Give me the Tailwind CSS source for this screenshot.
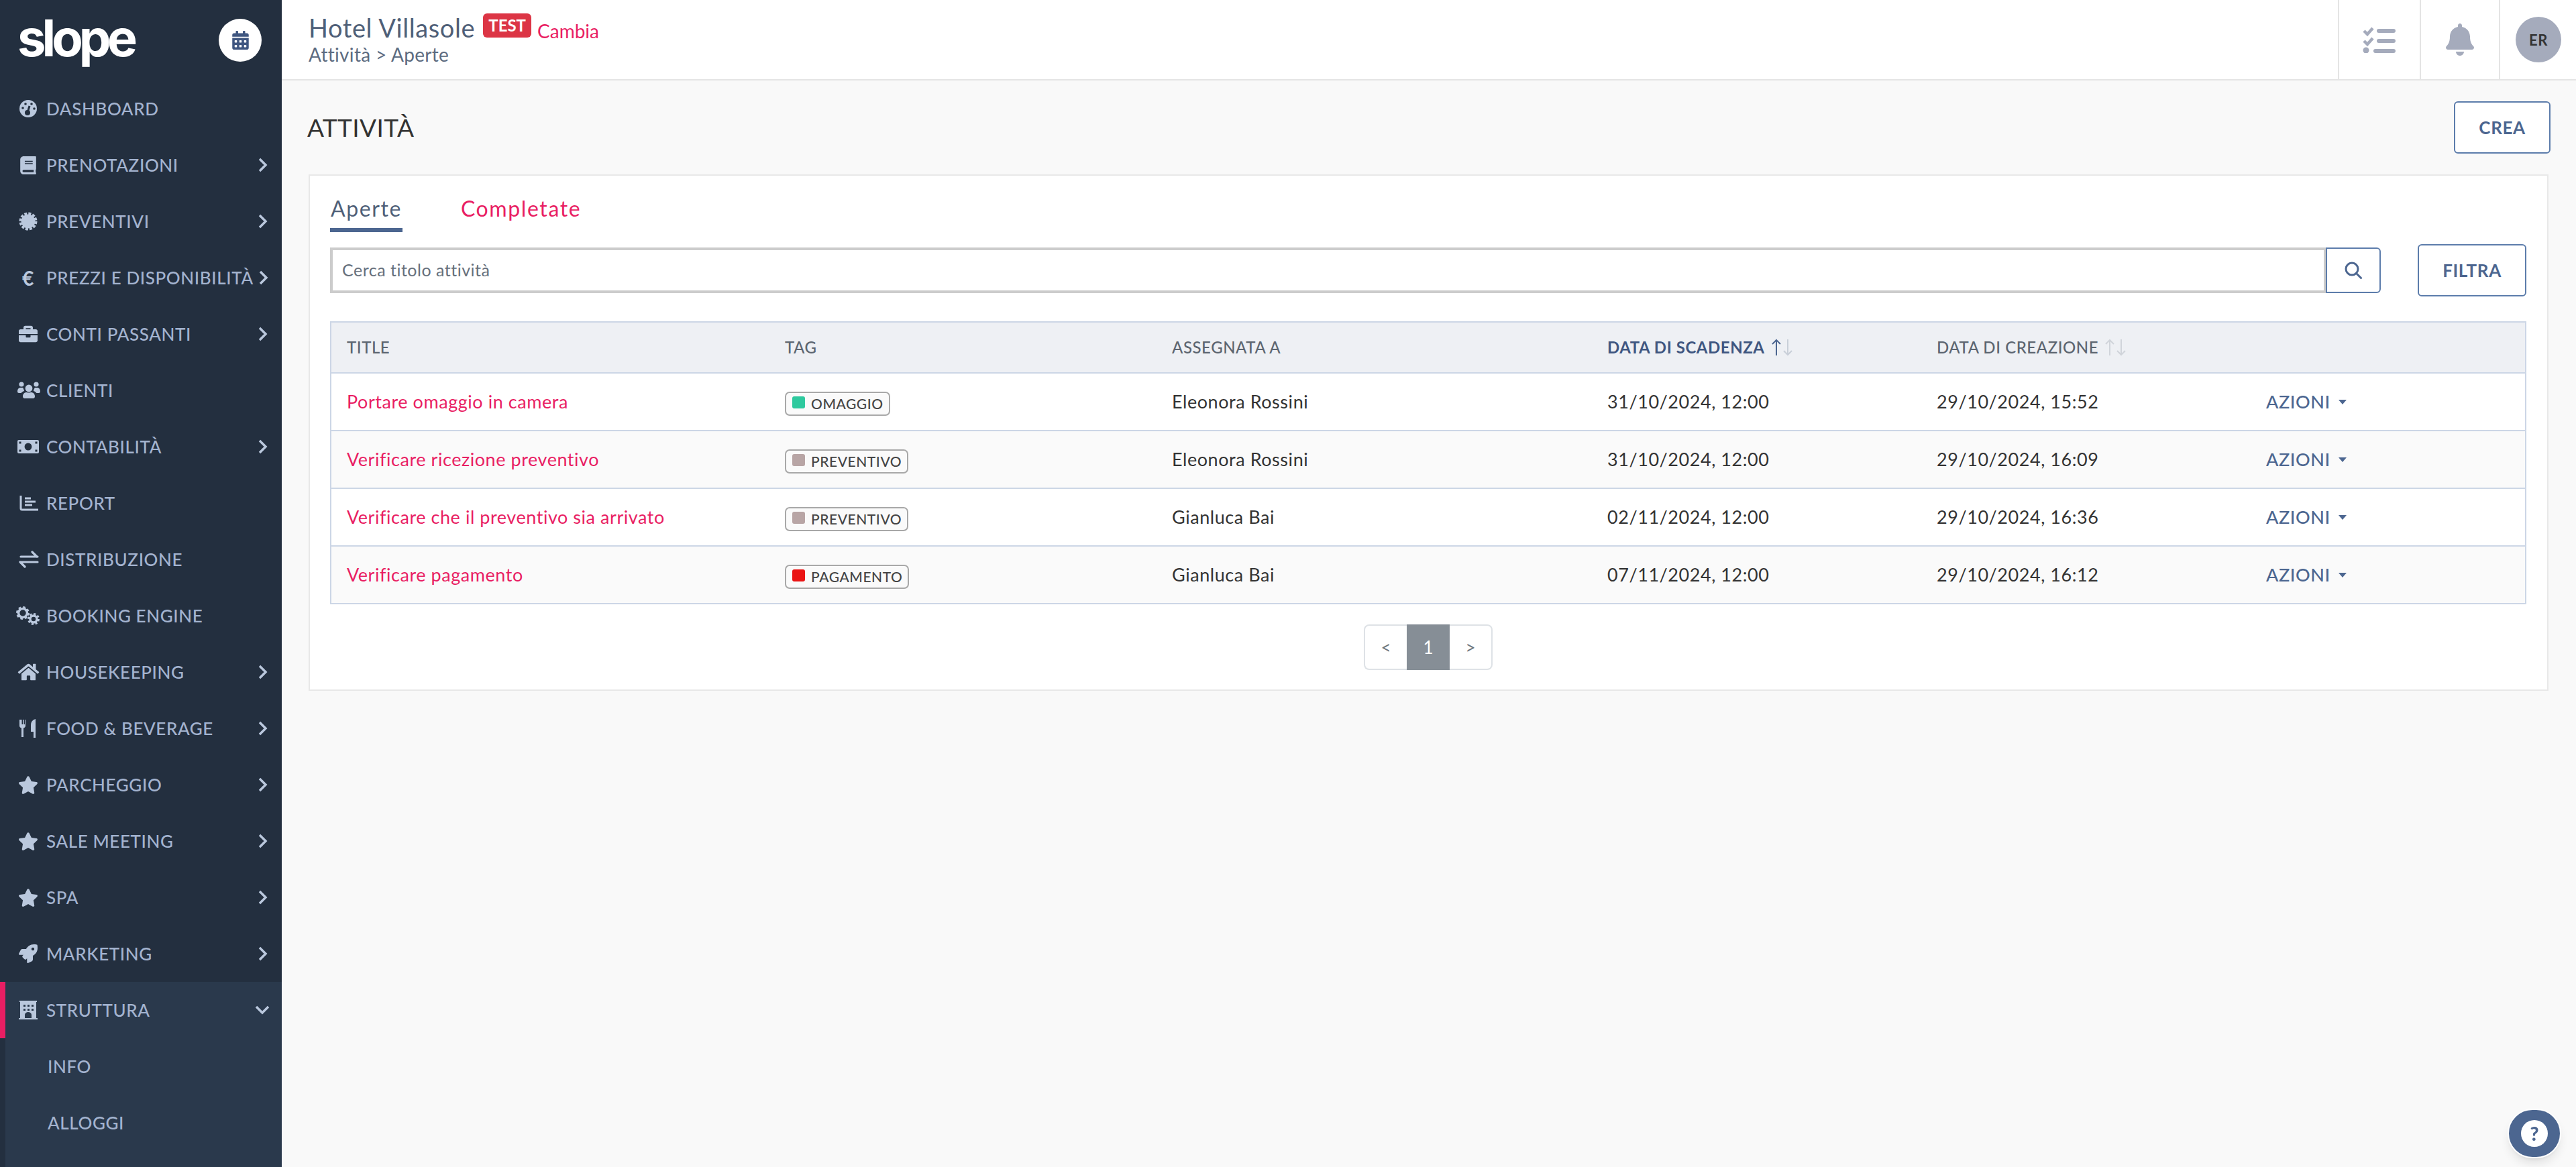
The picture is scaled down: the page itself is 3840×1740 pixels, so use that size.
<!DOCTYPE html>
<html lang="en">
<head>
  <meta charset="UTF-8" />
  <title>Slope - Attività</title>
  <script src="https://cdn.jsdelivr.net/npm/@tailwindcss/browser@4"></script>
</head>
<body class="h-[1740px] overflow-hidden bg-[#f9f9f9] font-['Lato',sans-serif] flex">

  <!-- sidebar -->
  <aside class="w-[420px] h-[1740px] shrink-0 overflow-hidden bg-[#232f3f] text-[#a3b3cf] text-[26px] font-medium tracking-[0.6px]">
    <div class="h-[120px] flex items-center justify-between pl-[26px] pr-[30px]">
      <span class="text-white text-[76px] font-['Inter',sans-serif] font-bold tracking-[-6px] leading-none -mt-[8px]">slope</span>
      <span class="w-[64px] h-[64px] rounded-full bg-white flex items-center justify-center">
        <svg class="w-[25px] h-[28px] fill-[#3f5680]" viewBox="0 0 448 512"><path d="M0 464c0 26.5 21.5 48 48 48h352c26.5 0 48-21.5 48-48V192H0v272zm320-196c0-6.6 5.4-12 12-12h40c6.6 0 12 5.4 12 12v40c0 6.6-5.4 12-12 12h-40c-6.6 0-12-5.4-12-12v-40zm0 128c0-6.6 5.4-12 12-12h40c6.6 0 12 5.4 12 12v40c0 6.6-5.4 12-12 12h-40c-6.6 0-12-5.4-12-12v-40zM192 268c0-6.6 5.4-12 12-12h40c6.6 0 12 5.4 12 12v40c0 6.6-5.4 12-12 12h-40c-6.6 0-12-5.4-12-12v-40zm0 128c0-6.6 5.4-12 12-12h40c6.6 0 12 5.4 12 12v40c0 6.6-5.4 12-12 12h-40c-6.6 0-12-5.4-12-12v-40zM64 268c0-6.6 5.4-12 12-12h40c6.6 0 12 5.4 12 12v40c0 6.6-5.4 12-12 12H76c-6.6 0-12-5.4-12-12v-40zm0 128c0-6.6 5.4-12 12-12h40c6.6 0 12 5.4 12 12v40c0 6.6-5.4 12-12 12H76c-6.6 0-12-5.4-12-12v-40zM400 64h-48V16c0-8.8-7.2-16-16-16h-32c-8.8 0-16 7.2-16 16v48H160V16c0-8.8-7.2-16-16-16h-32c-8.8 0-16 7.2-16 16v48H48C21.5 64 0 85.5 0 112v48h448v-48c0-26.5-21.5-48-48-48z"/></svg>
      </span>
    </div>

    <nav>
      <a class="h-[84px] flex items-center pl-[26px]">
        <svg class="w-[32px] h-[28px]" viewBox="0 0 32 28"><circle cx="16" cy="14" r="13" fill="#bac8dd"/><path d="M15 20l3-10" stroke="#232f3f" stroke-width="3"/><circle cx="15" cy="20" r="4" fill="#232f3f"/><circle cx="8" cy="13" r="1.8" fill="#232f3f"/><circle cx="12" cy="7" r="1.8" fill="#232f3f"/><circle cx="21" cy="7" r="1.8" fill="#232f3f"/><circle cx="25" cy="14" r="1.8" fill="#232f3f"/></svg>
        <span class="ml-[11px]">DASHBOARD</span>
      </a>
      <a class="h-[84px] flex items-center pl-[26px]">
        <span class="w-[32px] flex justify-center"><svg class="w-[24px] h-[27px] fill-[#bac8dd]" viewBox="0 0 448 512"><path d="M448 360V24c0-13.3-10.7-24-24-24H96C43 0 0 43 0 96v320c0 53 43 96 96 96h328c13.3 0 24-10.7 24-24v-16c0-7.5-3.5-14.3-8.9-18.7-4.2-15.4-4.2-59.3 0-74.7 5.4-4.3 8.9-11.1 8.9-18.6zM128 134c0-3.3 2.7-6 6-6h212c3.3 0 6 2.7 6 6v20c0 3.3-2.7 6-6 6H134c-3.3 0-6-2.7-6-6v-20zm0 64c0-3.3 2.7-6 6-6h212c3.3 0 6 2.7 6 6v20c0 3.3-2.7 6-6 6H134c-3.3 0-6-2.7-6-6v-20zm253.4 250H96c-17.7 0-32-14.3-32-32 0-17.6 14.4-32 32-32h285.4c-1.9 17.1-1.9 46.9 0 64z"/></svg></span>
        <span class="ml-[11px]">PRENOTAZIONI</span>
        <svg class="ml-auto mr-[21px] w-[14px] h-[22px] fill-none stroke-[#bac8dd] stroke-[3.5]" viewBox="0 0 14 22"><path d="M2 2l9 9-9 9"/></svg>
      </a>
      <a class="h-[84px] flex items-center pl-[26px]">
        <svg class="w-[32px] h-[28px]" viewBox="0 0 32 28"><circle cx="16" cy="14" r="10.5" fill="#bac8dd"/><circle cx="16" cy="14" r="11.5" fill="none" stroke="#bac8dd" stroke-width="4" stroke-dasharray="4 2.02"/></svg>
        <span class="ml-[11px]">PREVENTIVI</span>
        <svg class="ml-auto mr-[21px] w-[14px] h-[22px] fill-none stroke-[#bac8dd] stroke-[3.5]" viewBox="0 0 14 22"><path d="M2 2l9 9-9 9"/></svg>
      </a>
      <a class="h-[84px] flex items-center pl-[26px]">
        <span class="w-[32px] text-center text-[#bac8dd] text-[30px] font-bold leading-none">€</span>
        <span class="ml-[11px] whitespace-nowrap">PREZZI E DISPONIBILITÀ</span>
        <svg class="ml-auto mr-[20px] w-[14px] h-[22px] shrink-0 fill-none stroke-[#bac8dd] stroke-[3.5]" viewBox="0 0 14 22"><path d="M2 2l9 9-9 9"/></svg>
      </a>
      <a class="h-[84px] flex items-center pl-[26px]">
        <span class="w-[32px] flex justify-center"><svg class="w-[28px] h-[28px] fill-[#bac8dd]" viewBox="0 0 512 512"><path d="M320 336c0 8.84-7.16 16-16 16h-96c-8.84 0-16-7.16-16-16v-48H0v144c0 25.6 22.4 48 48 48h416c25.6 0 48-22.4 48-48V288H320v48zm144-208h-80V80c0-25.6-22.4-48-48-48H176c-25.6 0-48 22.4-48 48v48H48c-25.6 0-48 22.4-48 48v80h512v-80c0-25.6-22.4-48-48-48zm-144 0H192V96h128v32z"/></svg></span>
        <span class="ml-[11px]">CONTI PASSANTI</span>
        <svg class="ml-auto mr-[21px] w-[14px] h-[22px] fill-none stroke-[#bac8dd] stroke-[3.5]" viewBox="0 0 14 22"><path d="M2 2l9 9-9 9"/></svg>
      </a>
      <a class="h-[84px] flex items-center pl-[26px]">
        <svg class="w-[34px] h-[26px] fill-[#bac8dd]" viewBox="0 0 34 26"><circle cx="6" cy="4" r="3.6"/><circle cx="28" cy="4" r="3.6"/><circle cx="17" cy="10" r="5.4"/><path d="M0 15c0-4 2-6 5-6h3c1 1 1.6 3 2 5-2 .6-3.4 1.6-4.4 3H2c-1 0-2-1-2-2zM34 15c0-4-2-6-5-6h-3c-1 1-1.6 3-2 5 2 .6 3.4 1.6 4.4 3H32c1 0 2-1 2-2zM8 22c0-4 3-6 5.4-6 1.4.6 5.8.6 7.2 0 2.4 0 5.4 2 5.4 6 0 2-1.2 3-2.6 3H10.6C9.2 25 8 24 8 22z"/></svg>
        <span class="ml-[9px]">CLIENTI</span>
      </a>
      <a class="h-[84px] flex items-center pl-[26px]">
        <svg class="w-[32px] h-[20px]" viewBox="0 0 32 20"><rect width="32" height="20" rx="2" fill="#bac8dd"/><ellipse cx="16" cy="10" rx="5.4" ry="5.6" fill="#232f3f"/><rect x="2.500" y="2.500" width="3" height="3" fill="#232f3f"/><rect x="26.500" y="2.500" width="3" height="3" fill="#232f3f"/><rect x="2.500" y="14.500" width="3" height="3" fill="#232f3f"/><rect x="26.500" y="14.500" width="3" height="3" fill="#232f3f"/></svg>
        <span class="ml-[11px]">CONTABILITÀ</span>
        <svg class="ml-auto mr-[21px] w-[14px] h-[22px] fill-none stroke-[#bac8dd] stroke-[3.5]" viewBox="0 0 14 22"><path d="M2 2l9 9-9 9"/></svg>
      </a>
      <a class="h-[84px] flex items-center pl-[26px]">
        <svg class="w-[32px] h-[24px]" viewBox="0 0 32 24"><path d="M5 1v19q0 2 2 2h24" fill="none" stroke="#bac8dd" stroke-width="3"/><path d="M11 5h9M11 10h16M11 15h11" stroke="#bac8dd" stroke-width="3"/></svg>
        <span class="ml-[11px]">REPORT</span>
      </a>
      <a class="h-[84px] flex items-center pl-[26px]">
        <svg class="w-[32px] h-[26px]" viewBox="0 0 32 26"><path d="M5 9h25M22 2l7 7M30 17H5M11 24l-7-7" fill="none" stroke="#bac8dd" stroke-width="3.2" stroke-linecap="round"/></svg>
        <span class="ml-[11px]">DISTRIBUZIONE</span>
      </a>
      <a class="h-[84px] flex items-center pl-[24px]">
        <svg class="w-[36px] h-[28px]" viewBox="0 0 36 28"><circle cx="10" cy="10" r="6.500" fill="none" stroke="#bac8dd" stroke-width="3.6"/><circle cx="10" cy="10" r="8.500" fill="none" stroke="#bac8dd" stroke-width="3" stroke-dasharray="3.5 3.17"/><circle cx="26" cy="19" r="5" fill="none" stroke="#bac8dd" stroke-width="3.4"/><circle cx="26" cy="19" r="7.500" fill="none" stroke="#bac8dd" stroke-width="3" stroke-dasharray="3.1 2.79"/></svg>
        <span class="ml-[9px]">BOOKING ENGINE</span>
      </a>
      <a class="h-[84px] flex items-center pl-[26px]">
        <span class="w-[32px] flex justify-center"><svg class="w-[33px] h-[28px] shrink-0 fill-[#bac8dd]" viewBox="0 0 576 512"><path d="M280.37 148.26L96 300.11V464a16 16 0 0 0 16 16l112.06-.29a16 16 0 0 0 15.92-16V368a16 16 0 0 1 16-16h64a16 16 0 0 1 16 16v95.64a16 16 0 0 0 16 16.05L464 480a16 16 0 0 0 16-16V300L295.67 148.26a12.19 12.19 0 0 0-15.3 0zM571.6 251.47L488 182.56V44.05a12 12 0 0 0-12-12h-56a12 12 0 0 0-12 12v72.61L318.47 43a48 48 0 0 0-61 0L4.34 251.47a12 12 0 0 0-1.6 16.9l25.5 31A12 12 0 0 0 45.15 301l235.22-193.74a12.19 12.19 0 0 1 15.3 0L530.9 301a12 12 0 0 0 16.9-1.6l25.5-31a12 12 0 0 0-1.7-16.93z"/></svg></span>
        <span class="ml-[11px]">HOUSEKEEPING</span>
        <svg class="ml-auto mr-[21px] w-[14px] h-[22px] fill-none stroke-[#bac8dd] stroke-[3.5]" viewBox="0 0 14 22"><path d="M2 2l9 9-9 9"/></svg>
      </a>
      <a class="h-[84px] flex items-center pl-[26px]">
        <svg class="w-[32px] h-[28px] fill-[#bac8dd]" viewBox="0 0 32 28"><path d="M5 1h1.500v7h1.500V1h1.500v7h1.500V1H12v9q0 2.500-3 3.500V27H6V13.500Q3 12.500 3 10V1zM27 0v28h-3v-9h-4V9q0-7 7-9z"/></svg>
        <span class="ml-[11px]">FOOD &amp; BEVERAGE</span>
        <svg class="ml-auto mr-[21px] w-[14px] h-[22px] fill-none stroke-[#bac8dd] stroke-[3.5]" viewBox="0 0 14 22"><path d="M2 2l9 9-9 9"/></svg>
      </a>
      <a class="h-[84px] flex items-center pl-[26px]">
        <span class="w-[32px] flex justify-center"><svg class="w-[30px] h-[27px] shrink-0 fill-[#bac8dd]" viewBox="0 0 576 512"><path d="M259.3 17.8L194 150.2 47.9 171.5c-26.2 3.8-36.7 36.1-17.7 54.6l105.7 103-25 145.5c-4.5 26.3 23.2 46 46.4 33.7L288 439.6l130.7 68.7c23.2 12.2 50.9-7.4 46.4-33.7l-25-145.5 105.7-103c19-18.5 8.5-50.8-17.7-54.6L382 150.2 316.7 17.8c-11.7-23.6-45.6-23.9-57.4 0z"/></svg></span>
        <span class="ml-[11px]">PARCHEGGIO</span>
        <svg class="ml-auto mr-[21px] w-[14px] h-[22px] fill-none stroke-[#bac8dd] stroke-[3.5]" viewBox="0 0 14 22"><path d="M2 2l9 9-9 9"/></svg>
      </a>
      <a class="h-[84px] flex items-center pl-[26px]">
        <span class="w-[32px] flex justify-center"><svg class="w-[30px] h-[27px] shrink-0 fill-[#bac8dd]" viewBox="0 0 576 512"><path d="M259.3 17.8L194 150.2 47.9 171.5c-26.2 3.8-36.7 36.1-17.7 54.6l105.7 103-25 145.5c-4.5 26.3 23.2 46 46.4 33.7L288 439.6l130.7 68.7c23.2 12.2 50.9-7.4 46.4-33.7l-25-145.5 105.7-103c19-18.5 8.5-50.8-17.7-54.6L382 150.2 316.7 17.8c-11.7-23.6-45.6-23.9-57.4 0z"/></svg></span>
        <span class="ml-[11px]">SALE MEETING</span>
        <svg class="ml-auto mr-[21px] w-[14px] h-[22px] fill-none stroke-[#bac8dd] stroke-[3.5]" viewBox="0 0 14 22"><path d="M2 2l9 9-9 9"/></svg>
      </a>
      <a class="h-[84px] flex items-center pl-[26px]">
        <span class="w-[32px] flex justify-center"><svg class="w-[30px] h-[27px] shrink-0 fill-[#bac8dd]" viewBox="0 0 576 512"><path d="M259.3 17.8L194 150.2 47.9 171.5c-26.2 3.8-36.7 36.1-17.7 54.6l105.7 103-25 145.5c-4.5 26.3 23.2 46 46.4 33.7L288 439.6l130.7 68.7c23.2 12.2 50.9-7.4 46.4-33.7l-25-145.5 105.7-103c19-18.5 8.5-50.8-17.7-54.6L382 150.2 316.7 17.8c-11.7-23.6-45.6-23.9-57.4 0z"/></svg></span>
        <span class="ml-[11px]">SPA</span>
        <svg class="ml-auto mr-[21px] w-[14px] h-[22px] fill-none stroke-[#bac8dd] stroke-[3.5]" viewBox="0 0 14 22"><path d="M2 2l9 9-9 9"/></svg>
      </a>
      <a class="h-[84px] flex items-center pl-[26px]">
        <span class="w-[32px] flex justify-center"><svg class="w-[28px] h-[28px] fill-[#bac8dd]" viewBox="0 0 512 512"><path d="M505.12019,19.09375c-1.18945-5.53125-6.65819-11-12.207-12.1875C460.716,0,435.507,0,410.40747,0,307.17523,0,245.26909,55.20312,199.05238,128H94.83772c-16.34763.01562-35.55658,11.875-42.88664,26.48438L2.51562,253.29688A28.4,28.4,0,0,0,0,264a24.00867,24.00867,0,0,0,24.00582,24H127.81618l-22.47457,22.46875c-11.36521,11.36133-12.99607,32.25781,0,45.25L156.24582,406.625c11.15623,11.1875,32.15619,13.15625,45.27726,0l22.47457-22.46875V488a24.00867,24.00867,0,0,0,24.00581,24,28.55934,28.55934,0,0,0,10.707-2.51562l98.72834-49.39063c14.62888-7.29687,26.50776-26.5,26.50776-42.85937V312.79688c72.59753-46.3125,128.03493-108.40626,128.03493-211.09376C512.07526,76.5,512.07526,51.29688,505.12019,19.09375ZM384.04033,168A40,40,0,1,1,424.05,128,40.02322,40.02322,0,0,1,384.04033,168Z"/></svg></span>
        <span class="ml-[11px]">MARKETING</span>
        <svg class="ml-auto mr-[21px] w-[14px] h-[22px] fill-none stroke-[#bac8dd] stroke-[3.5]" viewBox="0 0 14 22"><path d="M2 2l9 9-9 9"/></svg>
      </a>
      <a class="h-[84px] flex items-center pl-[18px] border-l-[8px] border-[#e91e63] bg-[#2a394c]">
        <svg class="w-[32px] h-[28px]" viewBox="0 0 32 28"><path d="M3 0h26v2h-1v24h2v2H2v-2h2V2H3z" fill="#bac8dd"/><path d="M9 6h3v3H9zM15 6h3v3h-3zM21 6h3v3h-3zM9 12h3v3H9zM15 12h3v3h-3zM21 12h3v3h-3zM11 26v-5a5 4 0 0 1 10 0v5z" fill="#2a394c"/></svg>
        <span class="ml-[11px]">STRUTTURA</span>
        <svg class="ml-auto mr-[18px] w-[22px] h-[14px] fill-none stroke-[#bac8dd] stroke-[3.5]" viewBox="0 0 22 14"><path d="M2 2l9 9 9-9"/></svg>
      </a>
      <div class="ml-[8px] bg-[#2a394c]">
        <a class="h-[84px] flex items-center pl-[63px]">INFO</a>
        <a class="h-[84px] flex items-center pl-[63px]">ALLOGGI</a>
        <a class="h-[84px] flex items-center pl-[63px]">CONDIZIONI DI</a>
      </div>
    </nav>
  </aside>

  <main class="flex-1 min-w-0 flex flex-col">
    <!-- top bar -->
    <header class="h-[120px] bg-white border-b-2 border-[#e4e4e4] flex items-stretch shrink-0">
      <div class="pl-[40px] pt-[18px]">
        <div class="flex items-start h-[46px]">
          <span class="text-[38px] leading-[46px] text-[#4f5f78] tracking-[0.6px]">Hotel Villasole</span>
          <span class="ml-[12px] mt-[2px] h-[36px] px-[8px] rounded-[6px] bg-[#dc3545] text-white text-[24px] font-bold leading-[36px]">TEST</span>
          <span class="ml-[9px] mt-[9px] text-[28px] leading-[38px] text-[#e91e63]">Cambia</span>
        </div>
        <div class="text-[28px] leading-[34px] text-[#5c6b80] tracking-[0.3px]">Attività &gt; Aperte</div>
      </div>
      <div class="ml-auto flex">
        <div class="w-[122px] border-l-2 border-[#e4e4e4] flex items-center justify-center">
          <svg class="w-[50px] h-[40px]" viewBox="0 0 50 40"><path d="M2 7l5 5 8-9M2 22l5 5 8-9" fill="none" stroke="#a5abbc" stroke-width="4.500"/><circle cx="5" cy="36" r="4.500" fill="#a5abbc"/><path d="M24 7h22M24 22h22M19 37h27" stroke="#a5abbc" stroke-width="6" stroke-linecap="round"/></svg>
        </div>
        <div class="w-[118px] border-l-2 border-[#e4e4e4] flex items-center justify-center">
          <svg class="w-[42px] h-[48px] fill-[#a5abbc]" viewBox="0 0 448 512"><path d="M224 512c35.32 0 63.97-28.65 63.97-64H160.03c0 35.35 28.65 64 63.97 64zm215.39-149.71c-19.32-20.76-55.47-51.99-55.47-154.29 0-77.7-54.48-139.9-127.94-155.16V32c0-17.67-14.32-32-31.98-32s-31.98 14.33-31.98 32v20.84C118.56 68.1 64.08 130.3 64.08 208c0 102.3-36.15 133.53-55.47 154.29-6 6.45-8.66 14.16-8.61 21.71.11 16.4 12.98 32 32.1 32h383.8c19.12 0 32-15.6 32.1-32 .05-7.55-2.61-15.27-8.61-21.71z"/></svg>
        </div>
        <div class="w-[115px] border-l-2 border-[#e4e4e4] flex items-center pl-[23px]">
          <span class="w-[68px] h-[68px] rounded-full bg-[#a5abbc] flex items-center justify-center text-[#333] text-[22px] font-bold tracking-[0.5px]">ER</span>
        </div>
      </div>
    </header>

    <div class="h-[140px] shrink-0 flex items-center justify-between pl-[38px] pr-[38px]">
      <h1 class="text-[37px] text-[#333] font-normal tracking-[0.4px]">ATTIVITÀ</h1>
      <button class="w-[144px] h-[78px] rounded-[6px] border-2 border-[#5c7cab] bg-white text-[#4c6690] text-[26px] font-bold tracking-[0.6px]">CREA</button>
    </div>

    <!-- card -->
    <section class="ml-[40px] mr-[41px] h-[770px] bg-white border-2 border-[#e8e8e8] pl-[30px] pr-[31px]">
      <div class="flex h-[84px] items-end gap-[86px] text-[32px] tracking-[1.6px]">
        <a class="h-full flex items-center pt-[20px] px-[1px] border-b-[6px] border-[#4c6690] text-[#4f5f78]">Aperte</a>
        <a class="h-full flex items-center pt-[20px] px-[1px] border-b-[6px] border-transparent text-[#e91e63]">Completate</a>
      </div>

      <div class="mt-[18px] h-[78px] flex items-center justify-between">
        <div class="flex h-[68px]">
          <div class="w-[2976px] border-[4px] border-[#cccccc] flex items-center pl-[14px] text-[25px] tracking-[0.5px] text-[#66707c]">Cerca titolo attività</div>
          <button class="w-[82px] -ml-[1px] rounded-r-[6px] border-2 border-[#5c7cab] flex items-center justify-center">
            <svg class="w-[26px] h-[26px] fill-none stroke-[#4c6690] stroke-[3]" viewBox="0 0 26 26"><circle cx="11" cy="11" r="9"/><path d="M17.500 17.500l7 7" stroke-linecap="round"/></svg>
          </button>
        </div>
        <button class="w-[162px] h-[78px] rounded-[6px] border-2 border-[#5c7cab] text-[#4c6690] text-[26px] font-bold tracking-[0.6px]">FILTRA</button>
      </div>

      <table class="mt-[37px] w-[3274px] table-fixed border-collapse border-2 border-[#ccd6e6] text-[27px] tracking-[0.55px]">
        <colgroup>
          <col class="w-[653px]" /><col class="w-[577px]" /><col class="w-[649px]" /><col class="w-[491px]" /><col class="w-[491px]" /><col />
        </colgroup>
        <thead class="bg-[#eef0f4] text-[24px] font-medium text-[#5c6570]">
          <tr class="h-[76px] border-b-2 border-[#ccd6e6]">
            <th class="pl-[23px] text-left font-medium">TITLE</th>
            <th class="pl-[24px] text-left font-medium">TAG</th>
            <th class="pl-[24px] text-left font-medium">ASSEGNATA A</th>
            <th class="pl-[24px] text-left font-bold text-[#3f5680]">
              <span class="inline-flex items-center gap-[8px]">DATA DI SCADENZA
                <svg class="w-[36px] h-[26px] fill-none stroke-[2]" viewBox="0 0 36 26"><path d="M9 25V2M3 8l6-6 6 6" stroke="#4c6690"/><path d="M26 1v23M20 18l6 6 6-6" stroke="#c9cfd8"/></svg>
              </span>
            </th>
            <th class="pl-[24px] text-left font-medium">
              <span class="inline-flex items-center gap-[8px]">DATA DI CREAZIONE
                <svg class="w-[36px] h-[26px] fill-none stroke-[2] stroke-[#d0d4da]" viewBox="0 0 36 26"><path d="M9 25V2M3 8l6-6 6 6M26 1v23M20 18l6 6 6-6"/></svg>
              </span>
            </th>
            <th></th>
          </tr>
        </thead>
        <tbody class="text-[#333]">
          <tr class="h-[86px] border-b-2 border-[#ccd6e6] bg-white">
            <td class="pl-[23px] text-[#e91e63]">Portare omaggio in camera</td>
            <td class="pl-[24px]">
              <span class="inline-flex items-center h-[36px] pl-[9px] pr-[8px] gap-[9px] rounded-[7px] border-2 border-[#a8a8a8] bg-[#fafafa] text-[21px] font-medium text-[#444]"><i class="w-[19px] h-[18px] rounded-[3px] bg-[#2ec99e] -mt-[4px]"></i>OMAGGIO</span>
            </td>
            <td class="pl-[24px]">Eleonora Rossini</td>
            <td class="pl-[24px]">31/10/2024, 12:00</td>
            <td class="pl-[24px]">29/10/2024, 15:52</td>
            <td class="pl-[24px] text-[#4c6690] font-medium"><span class="inline-flex items-center">AZIONI<i class="ml-[12px] border-x-[6px] border-t-[7px] border-x-transparent border-t-[#4c6690]"></i></span></td>
          </tr>
          <tr class="h-[86px] border-b-2 border-[#ccd6e6] bg-[#fafafa]">
            <td class="pl-[23px] text-[#e91e63]">Verificare ricezione preventivo</td>
            <td class="pl-[24px]">
              <span class="inline-flex items-center h-[36px] pl-[9px] pr-[8px] gap-[9px] rounded-[7px] border-2 border-[#a8a8a8] bg-[#fafafa] text-[21px] font-medium text-[#444]"><i class="w-[19px] h-[18px] rounded-[3px] bg-[#b8a5a5] -mt-[4px]"></i>PREVENTIVO</span>
            </td>
            <td class="pl-[24px]">Eleonora Rossini</td>
            <td class="pl-[24px]">31/10/2024, 12:00</td>
            <td class="pl-[24px]">29/10/2024, 16:09</td>
            <td class="pl-[24px] text-[#4c6690] font-medium"><span class="inline-flex items-center">AZIONI<i class="ml-[12px] border-x-[6px] border-t-[7px] border-x-transparent border-t-[#4c6690]"></i></span></td>
          </tr>
          <tr class="h-[86px] border-b-2 border-[#ccd6e6] bg-white">
            <td class="pl-[23px] text-[#e91e63]">Verificare che il preventivo sia arrivato</td>
            <td class="pl-[24px]">
              <span class="inline-flex items-center h-[36px] pl-[9px] pr-[8px] gap-[9px] rounded-[7px] border-2 border-[#a8a8a8] bg-[#fafafa] text-[21px] font-medium text-[#444]"><i class="w-[19px] h-[18px] rounded-[3px] bg-[#b8a5a5] -mt-[4px]"></i>PREVENTIVO</span>
            </td>
            <td class="pl-[24px]">Gianluca Bai</td>
            <td class="pl-[24px]">02/11/2024, 12:00</td>
            <td class="pl-[24px]">29/10/2024, 16:36</td>
            <td class="pl-[24px] text-[#4c6690] font-medium"><span class="inline-flex items-center">AZIONI<i class="ml-[12px] border-x-[6px] border-t-[7px] border-x-transparent border-t-[#4c6690]"></i></span></td>
          </tr>
          <tr class="h-[86px] border-b-2 border-[#ccd6e6] bg-[#fafafa]">
            <td class="pl-[23px] text-[#e91e63]">Verificare pagamento</td>
            <td class="pl-[24px]">
              <span class="inline-flex items-center h-[36px] pl-[9px] pr-[8px] gap-[9px] rounded-[7px] border-2 border-[#a8a8a8] bg-[#fafafa] text-[21px] font-medium text-[#444]"><i class="w-[19px] h-[18px] rounded-[3px] bg-[#ea1414] -mt-[4px]"></i>PAGAMENTO</span>
            </td>
            <td class="pl-[24px]">Gianluca Bai</td>
            <td class="pl-[24px]">07/11/2024, 12:00</td>
            <td class="pl-[24px]">29/10/2024, 16:12</td>
            <td class="pl-[24px] text-[#4c6690] font-medium"><span class="inline-flex items-center">AZIONI<i class="ml-[12px] border-x-[6px] border-t-[7px] border-x-transparent border-t-[#4c6690]"></i></span></td>
          </tr>
        </tbody>
      </table>

      <div class="mt-[30px] flex justify-center">
        <div class="flex h-[68px] text-[26px] text-[#6c757d]">
          <span class="w-[64px] rounded-l-[8px] border-2 border-r-0 border-[#dee2e6] flex items-center justify-center">&lt;</span>
          <span class="w-[64px] bg-[#868e96] text-white flex items-center justify-center">1</span>
          <span class="w-[64px] rounded-r-[8px] border-2 border-l-0 border-[#dee2e6] flex items-center justify-center">&gt;</span>
        </div>
      </div>
    </section>
  </main>

  <!-- help -->
  <button class="fixed right-[22px] bottom-[13px] w-[80px] h-[74px] rounded-full bg-[#4c6690] border-2 border-white shadow-lg flex items-center justify-center">
    <span class="w-[40px] h-[40px] rounded-full bg-white text-[#4c6690] text-[28px] font-black leading-[40px] text-center">?</span>
  </button>

</body>
</html>
